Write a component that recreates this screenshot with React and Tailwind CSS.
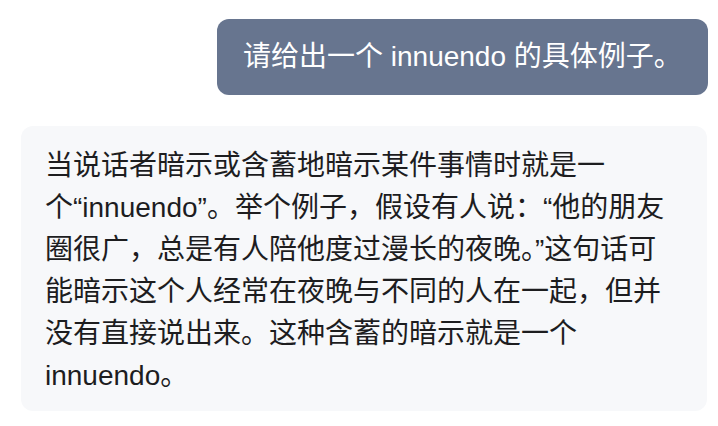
export default function App() {
  const font = { fontFamily: '"Liberation Sans", "Noto Sans CJK SC", sans-serif' };
  return (
    <div className="w-[718px] h-[426px] bg-white overflow-hidden flex flex-col" style={font}>
      <div className="flex justify-end pt-[19px] pr-[10px]">
        <div className="w-[491px] bg-[#67758f] text-white text-[28px] leading-[42px] rounded-[12px] pl-[26px] py-[17px] whitespace-nowrap">
          请给出一个 innuendo 的具体例子。
        </div>
      </div>
      <div className="mt-[31px] ml-[21px] mr-[11px] bg-[#f7f8fa] rounded-[12px] pl-[24px] pr-[10px] pt-[19px] pb-[14px] text-[#1d1d1f] text-[28px] leading-[42px] whitespace-nowrap">
        当说话者暗示或含蓄地暗示某件事情时就是一<br />
        个“innuendo”。举个例子，假设有人说：“他的朋友<br />
        圈很广，总是有人陪他度过漫长的夜晚。”这句话可<br />
        能暗示这个人经常在夜晚与不同的人在一起，但并<br />
        没有直接说出来。这种含蓄的暗示就是一个<br />
        innuendo。
      </div>
    </div>
  );
}
